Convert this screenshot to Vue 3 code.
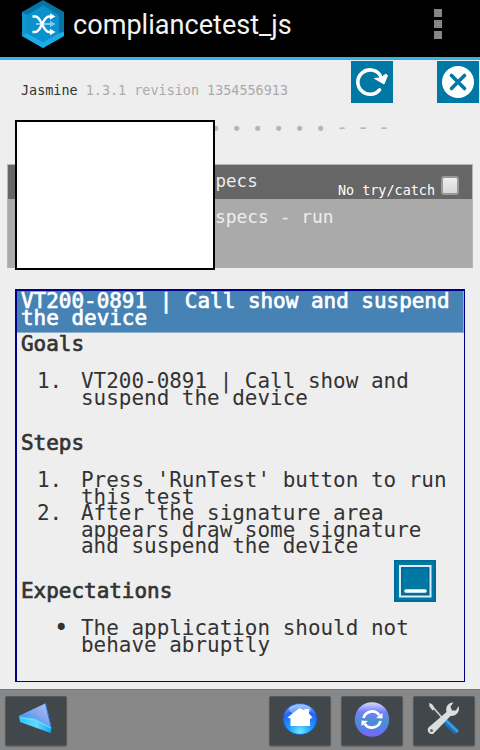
<script setup>
const marks = ['•', '•', '•', '•', '•', '•', '-', '-', '-']
const sections = [
  { title: 'Goals', type: 'ol', items: [['VT200-0891 | Call show and', 'suspend the device']] },
  {
    title: 'Steps',
    type: 'ol',
    items: [
      ["Press 'RunTest' button to run", 'this test'],
      ['After the signature area', 'appears draw some signature', 'and suspend the device'],
    ],
  },
  { title: 'Expectations', type: 'ul', items: [['The application should not', 'behave abruptly']] },
]
</script>

<template>
  <div class="screen">
    <header class="appbar">
      <svg class="logo" width="42" height="48" viewBox="0 0 42 48">
        <path d="M21 0 42 12v24L21 48 0 36V12z" fill="#0674a6" />
        <path d="M0 33 5 33 21 42 37 33l5-1v4L21 48 0 36z" fill="#1badea" />
        <path d="M0 12l5 3v18l-5 3z" fill="#1594cc" />
        <path d="M21 5.500 37 15v18L21 42 5 33V15z" fill="#0b91cd" />
        <path d="M14 24h16" stroke="#7fc9ea" stroke-width="2" />
        <path d="M28 20.800 33.500 24 28 27.200z" fill="#7fc9ea" />
        <path d="M10.500 16.500h3c6 0 7 15.500 13.500 15.500h2" fill="none" stroke="#fff" stroke-width="2.500" />
        <path d="M10.500 32h3c6 0 7-15.500 13.500-15.500h2" fill="none" stroke="#fff" stroke-width="2.500" />
        <path d="M28 13.300 33.500 16.500 28 19.700zM28 28.800 33.500 32 28 35.200z" fill="#fff" />
      </svg>
      <h1>compliancetest_js</h1>
      <div class="overflow"><i></i><i></i><i></i></div>
    </header>

    <section class="runner">
      <p class="version"><b>Jasmine</b> 1.3.1 revision 1354556913</p>
      <button class="tile">
        <svg width="42" height="42" viewBox="0 0 42 42">
          <path d="M28.500 28.800A12.200 12.200 0 1 1 29 14" fill="none" stroke="#fff" stroke-width="3.600" stroke-linecap="round" />
          <path d="M23.500 17.500 28.500 17 29 13 31.500 15.500 35 13 36.500 14.500 33 23z" fill="#fff" stroke="#fff" stroke-linejoin="round" />
        </svg>
      </button>
      <button class="tile">
        <svg width="42" height="42" viewBox="0 0 42 42">
          <circle cx="21" cy="21" r="16" fill="#fff" />
          <path d="M14.500 14.500 27.500 27.500M27.500 14.500 14.500 27.500" stroke="#0078a4" stroke-width="3.600" stroke-linecap="round" />
        </svg>
      </button>
    </section>

    <div class="marks"><span v-for="(m, i) in marks" :key="i" :class="{ dash: m === '-' }">{{ m }}</span></div>

    <section class="results">
      <div class="bar"><span>specs</span><label>No try/catch<i class="check"></i></label></div>
      <div class="run">specs - run</div>
    </section>
    <div class="signature"></div>

    <main class="card">
      <h2>VT200-0891 | Call show and suspend<br />the device</h2>
      <section v-for="s in sections" :key="s.title" :class="s.type">
        <h3>{{ s.title }}</h3>
        <div v-for="(item, i) in s.items" :key="i" class="item">
          <span class="marker">{{ s.type === 'ol' ? i + 1 + '.' : '•' }}</span>
          <div><div v-for="line in item" :key="line" class="line">{{ line }}</div></div>
        </div>
      </section>
    </main>
    <button class="tile minimize">
      <svg width="42" height="42" viewBox="0 0 42 42">
        <rect x="1" y="1" width="40" height="40" fill="none" stroke="#006c9a" stroke-width="2" />
        <rect x="6" y="6" width="30.500" height="30.500" fill="none" stroke="#d5eef7" stroke-width="2" />
        <rect x="8" y="8" width="26.500" height="26.500" fill="none" stroke="#00638f" stroke-width="1" />
        <path d="M12 31h19" stroke="#fff" stroke-width="3.600" stroke-linecap="round" />
      </svg>
    </button>

    <nav class="toolbar">
      <button>
        <svg width="62" height="50" viewBox="0 0 62 50">
          <defs>
            <linearGradient id="face" x1="1" y1="0" x2="0" y2="1"><stop offset="0" stop-color="#c6bdf0" /><stop offset=".5" stop-color="#75a4ee" /><stop offset="1" stop-color="#2588ef" /></linearGradient>
            <linearGradient id="edge"><stop offset="0" stop-color="#27c5fb" /><stop offset=".55" stop-color="#65d9ff" /><stop offset="1" stop-color="#08a7f5" /></linearGradient>
          </defs>
          <path d="M14 20 40.500 7.500 46.500 33 45.500 37 15 26z" fill="url(#edge)" />
          <path d="M14 20 40.500 7.500 46 30.500 29 22.500z" fill="url(#face)" />
          <path d="M15 22 30 24 46 32" fill="none" stroke="#70dcff" stroke-width="1.200" />
          <path d="M40.500 7.500 46.500 33" stroke="#2379dc" stroke-width="1" />
        </svg>
      </button>
      <button class="home">
        <svg width="62" height="50" viewBox="0 0 62 50">
          <defs>
            <radialGradient id="blue" cx=".5" cy=".9" r=".85"><stop offset="0" stop-color="#6ce9ff" /><stop offset=".4" stop-color="#209bff" /><stop offset=".8" stop-color="#2463f3" /><stop offset="1" stop-color="#72abff" /></radialGradient>
          </defs>
          <ellipse cx="31" cy="23" rx="17" ry="15.500" fill="url(#blue)" stroke="#1553c9" stroke-width=".7" />
          <ellipse cx="31" cy="13.500" rx="11" ry="5" fill="#c5dcff" opacity=".5" />
          <path d="M18.500 21.500 30.500 12l5 2.500V13h4.500v4.500l3.500 4-2.500 1.500V30H21.500v-7.500z" fill="#fff" />
        </svg>
      </button>
      <button>
        <svg width="62" height="50" viewBox="0 0 62 50">
          <defs>
            <linearGradient id="violet" x1="0" y1="0" x2="0" y2="1"><stop offset="0" stop-color="#d8d8ff" /><stop offset=".28" stop-color="#737fff" /><stop offset=".55" stop-color="#4c8fcd" /><stop offset=".75" stop-color="#5380ec" /><stop offset="1" stop-color="#8062f4" /></linearGradient>
          </defs>
          <circle cx="31" cy="23.500" r="17.200" fill="url(#violet)" />
          <path d="M22.500 22A8.800 8.800 0 0 1 38.300 19.300M39.500 25A8.800 8.800 0 0 1 23.700 27.700" fill="none" stroke="#fff" stroke-width="2.800" />
          <path d="M35 22 41.500 17V22.500zM27 25 20.500 30V24.500z" fill="#fff" />
        </svg>
      </button>
      <button>
        <svg width="62" height="50" viewBox="0 0 62 50">
          <path d="M18 9 32 25" stroke="#c9cdcf" stroke-width="1.800" />
          <path d="M16 7 19 8 22 13 19.500 14.500 16.500 10.500z" fill="#d9dcde" />
          <path d="M32 25 44 36.500" stroke="#1b6fb0" stroke-width="6" />
          <path d="M33 24.500 45 36" stroke="#3d9bdb" stroke-width="2.500" />
          <path d="M15.500 31.500 33.500 16C32 10.500 36 6 40.500 6.500L37.500 10.500 39 14.500 43 14.500 45.500 10C47.500 15.500 43 20.500 37.500 20L21.500 36.500C19 40.500 12.500 36 15.500 31.500z" fill="#dcdddd" />
          <circle cx="18.500" cy="34.500" r="1.500" fill="#62676a" />
        </svg>
      </button>
    </nav>
  </div>
</template>

<style>
body { margin: 0; }
</style>

<style scoped>
* { box-sizing: border-box; }
h1, h2, h3, p { margin: 0; }
button { padding: 0; border: 0; display: block; }
svg { display: block; }
.screen { position: relative; width: 480px; height: 750px; overflow: hidden; background: #eee; color: #333; font-family: "DejaVu Sans Mono", monospace; display: flex; flex-direction: column; }
.appbar { height: 60px; flex: none; background: #000; border-bottom: 3px solid #33b5e5; display: flex; align-items: flex-start; padding-left: 22px; }
.appbar h1 { flex: 1; margin-left: 9px; font: 400 27.100px/50px Roboto, sans-serif; color: #f3f3f3; white-space: nowrap; }
.overflow { display: flex; flex-direction: column; gap: 3px; padding: 9px 38px 0 0; }
.overflow i { width: 8px; height: 8px; background: #868686; }
.runner { height: 60px; flex: none; display: flex; padding: 1px 1px 0 21px; }
.version { flex: 1; font-size: 13.450px; line-height: 20px; padding-top: 20px; color: #aaa; white-space: nowrap; }
.version b { font-weight: 400; color: #333; }
.tile { width: 42px; height: 42px; background: #0078a4; }
.tile + .tile { margin-left: 44px; }
.marks { height: 44px; flex: none; display: flex; padding-left: 205px; color: #b5b5b5; font-size: 17px; line-height: 18px; }
.marks span { width: 21px; text-align: center; }
.marks .dash { font-size: 20px; line-height: 15px; padding-left: 1px; }
.results { height: 104px; flex: none; margin: 0 7px 0 7px; border: 1px solid #b5b5b5; border-width: 1px 1px 0 1px; background: #aaa; font-size: 17.900px; color: #eee; }
.bar { height: 34px; background: #666; display: flex; justify-content: space-between; padding: 0 13px 0 197px; line-height: 33px; }
.bar span { font-size: 17.500px; }
.bar label { display: flex; font-size: 13.450px; line-height: 52px; color: #fff; }
.check { width: 18px; height: 19px; margin: 11px 0 0 6px; border: 2px solid #999; border-radius: 3px; background: linear-gradient(#eee, #d8d8d8); }
.run { padding-left: 207px; line-height: 35px; }
.signature { position: absolute; left: 15px; top: 120px; width: 200px; height: 150px; border: 2px solid #000; background: #fff; }
.card { height: 393px; flex: none; margin: 21px 15px 0; border: solid #000088; border-width: 2px 1px 1px 2px; font-size: 20.950px; line-height: 16.500px; white-space: nowrap; }
.card h2 { height: 42px; padding: 2px 0 0 4px; background: #4682b4; border: solid #8db0ce; border-width: 0 1px 1px 0; color: #fff; }
.card h2, .card h3 { font-size: inherit; line-height: 16.500px; font-weight: 400; -webkit-text-stroke: 0.700px currentColor; }
.card section { padding: 3px 0 26px 4px; }
.card section + section { padding-top: 2.500px; }
.card h3 { margin-bottom: 20.800px; }
.item { display: flex; }
.marker { width: 60px; padding-left: 16px; flex: none; }
.ul .marker { padding-left: 33px; font-size: 24px; }
.minimize { position: absolute; left: 394px; top: 560px; }
.toolbar { height: 61px; margin-top: auto; flex: none; background: #888; border-top: 1px solid #777; display: flex; gap: 10px; padding: 6px 5px 0; }
.toolbar button { width: 62px; height: 50px; border-radius: 3px; background: #42474b; box-shadow: inset 0 0 0 1px #55595c, 0 1px 1px #666; }
.toolbar .home { margin-left: auto; }
</style>
